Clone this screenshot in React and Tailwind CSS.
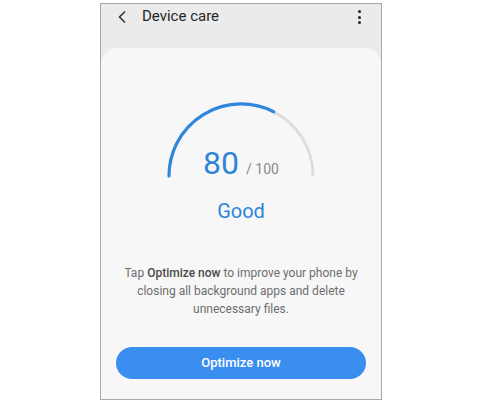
import React from "react";

export default function App() {
  return (
    <div className="w-[480px] h-[405px] bg-white pt-[3px] pl-[100px]" style={{ fontFamily: "Roboto, 'Liberation Sans', sans-serif" }}>
      <div className="w-[282px] h-[397px] border border-[#a8a8a8] bg-[#ebebeb] flex flex-col">
        {/* Header */}
        <div className="h-[44px] shrink-0 flex items-start pt-[2px] relative">
          <svg className="ml-[15px] mt-[4px]" width="12" height="14" viewBox="0 0 12 14">
            <polyline points="9,1.5 3.5,7 9,12.5" fill="none" stroke="#333" strokeWidth="1.6" />
          </svg>
          <span className="ml-[14px] text-[15px] leading-[20px] text-[#262626]">Device care</span>
          <div className="ml-auto mr-[20px] mt-[4px] flex flex-col gap-[2.5px]">
            <span className="w-[3px] h-[3px] rounded-full bg-[#222]" />
            <span className="w-[3px] h-[3px] rounded-full bg-[#222]" />
            <span className="w-[3px] h-[3px] rounded-full bg-[#222]" />
          </div>
        </div>
        {/* Card */}
        <div className="flex-1 bg-[#f7f7f7] rounded-t-[16px] flex flex-col items-center">
          <div className="relative w-[152px] mt-[54px] pt-[45px] flex justify-center items-baseline">
            <svg className="absolute left-0 top-0" width="152" height="78" viewBox="0 0 152 78">
              <path d="M 108.7 9.8 A 72 72 0 0 1 148 74" fill="none" stroke="#dcdcdc" strokeWidth="2.8" />
              <path d="M 4 74 A 72 72 0 0 1 108.7 9.8" fill="none" stroke="#2f86dc" strokeWidth="3.2" strokeLinecap="round" />
            </svg>
            <span className="text-[32px] leading-[32px] text-[#2e85d8]">80</span>
            <span className="ml-[7px] text-[14px] leading-[14px] text-[#8a8a8a]">/ 100</span>
          </div>
          <div className="mt-[22px] text-[20px] leading-[20px] text-[#2e85d8]">Good</div>
          <p className="mt-[43px] text-[12px] leading-[18px] text-[#6e6e6e] text-center whitespace-nowrap">
            Tap <span className="font-medium text-[#4a4a4a]">Optimize now</span> to improve your phone by
            <br />
            closing all background apps and delete
            <br />
            unnecessary files.
          </p>
          <button className="mt-[29px] w-[250px] h-[32px] rounded-full bg-[#3a8ef0] text-white text-[13px] font-medium">
            Optimize now
          </button>
        </div>
      </div>
    </div>
  );
}
